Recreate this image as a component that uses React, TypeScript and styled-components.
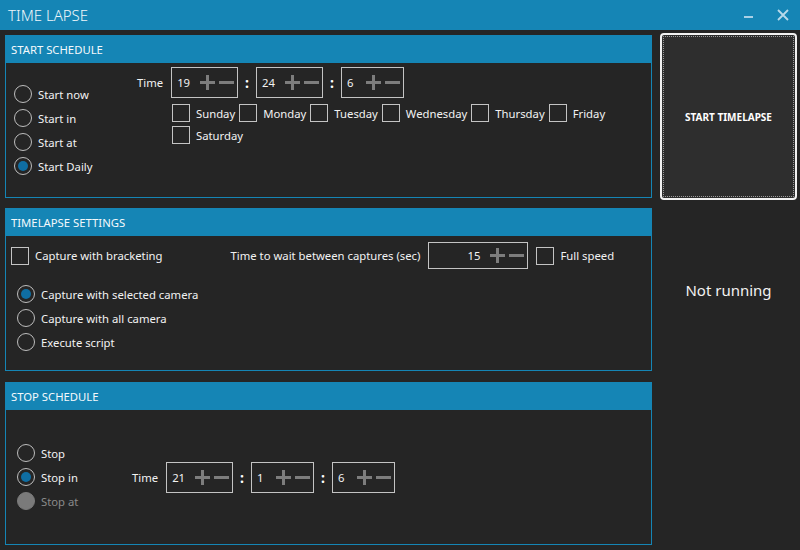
import React from "react";
import styled, { createGlobalStyle } from "styled-components";

const Global = createGlobalStyle`
  html, body { margin: 0; padding: 0; background: #252525; }
  body { font-family: "Noto Sans", "Open Sans", sans-serif; font-size: 11.3px; color: #f2f2f2; }
  * { box-sizing: border-box; }
`;

const BLUE = "#1585b5";

const Window = styled.div`
  width: 800px;
  height: 550px;
  background: #252525;
  display: flex;
  flex-direction: column;
  overflow: hidden;
`;

const TitleBar = styled.div`
  height: 30px;
  flex: none;
  background: ${BLUE};
  display: flex;
  align-items: center;
  padding: 0 4px 0 8px;
`;

const Title = styled.div`
  flex: 1;
  font-size: 15px;
  font-weight: 300;
  color: #eef6fa;
`;

const WinButton = styled.div`
  width: 26px;
  height: 20px;
  display: flex;
  align-items: center;
  justify-content: center;
  margin-left: 9px;
`;

const Main = styled.div`
  flex: 1;
  display: flex;
  padding: 5px 0 0 5px;
`;

const LeftCol = styled.div`
  width: 647px;
  display: flex;
  flex-direction: column;
`;

const RightCol = styled.div`
  flex: 1;
  display: flex;
  flex-direction: column;
  align-items: center;
  padding: 0 3px 0 8px;
`;

const Panel = styled.div<{ $mt?: number }>`
  height: 163px;
  flex: none;
  margin-top: ${(p) => p.$mt ?? 0}px;
  border: 1px solid ${BLUE};
  display: flex;
  flex-direction: column;
`;

const PanelHeader = styled.div`
  height: 27px;
  flex: none;
  background: ${BLUE};
  color: #f4f9fc;
  display: flex;
  align-items: center;
  padding-left: 5px;
`;

const PanelBody = styled.div<{ $pad: string; $align?: string }>`
  flex: 1;
  display: flex;
  padding: ${(p) => p.$pad};
  align-items: ${(p) => p.$align ?? "flex-start"};
`;

const Column = styled.div<{ $gap?: number; $pt?: number; $w?: number }>`
  display: flex;
  flex-direction: column;
  gap: ${(p) => p.$gap ?? 0}px;
  padding-top: ${(p) => p.$pt ?? 0}px;
  ${(p) => (p.$w ? `width: ${p.$w}px; flex: none;` : "")}
`;

const Row = styled.div<{ $gap?: number; $ml?: number }>`
  display: flex;
  align-items: center;
  gap: ${(p) => p.$gap ?? 0}px;
  margin-left: ${(p) => p.$ml ?? 0}px;
`;

const RadioRow = styled.div<{ $disabled?: boolean }>`
  height: 24px;
  display: flex;
  align-items: center;
  gap: 6px;
  color: ${(p) => (p.$disabled ? "#8a8a8a" : "#f2f2f2")};
`;

const RadioCircle = styled.span<{ $checked?: boolean; $disabled?: boolean }>`
  width: 18px;
  height: 18px;
  border-radius: 50%;
  border: 1.6px solid ${(p) => (p.$disabled ? "#7a7a7a" : "#bdbdbd")};
  background: ${(p) => (p.$disabled ? "#7a7a7a" : "transparent")};
  display: flex;
  align-items: center;
  justify-content: center;
  flex: none;
  &::after {
    content: "";
    width: 10px;
    height: 10px;
    border-radius: 50%;
    background: ${(p) => (p.$checked ? "#0f6ea3" : "transparent")};
  }
`;

const Radio = ({ label, checked, disabled }: { label: string; checked?: boolean; disabled?: boolean }) => (
  <RadioRow $disabled={disabled}>
    <RadioCircle $checked={checked} $disabled={disabled} />
    <span>{label}</span>
  </RadioRow>
);

const CheckRow = styled.div`
  display: flex;
  align-items: center;
  gap: 6px;
  height: 18px;
`;

const CheckBox = styled.span`
  width: 18px;
  height: 18px;
  border: 1.5px solid #c4c4c4;
  flex: none;
`;

const Check = ({ label }: { label: string }) => (
  <CheckRow>
    <CheckBox />
    <span>{label}</span>
  </CheckRow>
);

const SpinBox = styled.div<{ $w?: number; $h: number }>`
  height: ${(p) => p.$h}px;
  ${(p) => (p.$w ? `width: ${p.$w}px;` : "")}
  border: 1.5px solid #c4c4c4;
  display: flex;
  align-items: center;
  padding: 0 3px 0 5px;
  flex: none;
`;

const SpinValue = styled.span<{ $right?: boolean }>`
  flex: ${(p) => (p.$right ? 1 : "none")};
  min-width: 9px;
  text-align: ${(p) => (p.$right ? "right" : "left")};
  margin-right: 10px;
`;

const SpinIcons = styled.span`
  display: flex;
  align-items: center;
  gap: 4px;
`;

const PlusMinus = () => (
  <SpinIcons>
    <svg width="15" height="15" viewBox="0 0 15 15">
      <rect x="0" y="6" width="15" height="3" fill="#7d7d7d" />
      <rect x="6" y="0" width="3" height="15" fill="#7d7d7d" />
    </svg>
    <svg width="15" height="15" viewBox="0 0 15 15">
      <rect x="0" y="6" width="15" height="3" fill="#7d7d7d" />
    </svg>
  </SpinIcons>
);

const Colon = styled.span`
  font-weight: 700;
  font-size: 14px;
  margin: 0 7px;
  color: #ffffff;
`;

const TimeLabel = styled.span`
  margin-right: 8px;
`;

const TimeRow = ({ values, h }: { values: string[]; h: number }) => (
  <Row>
    <TimeLabel>Time</TimeLabel>
    {values.map((v, i) => (
      <React.Fragment key={i}>
        {i > 0 && <Colon>:</Colon>}
        <SpinBox $h={h}>
          <SpinValue>{v}</SpinValue>
          <PlusMinus />
        </SpinBox>
      </React.Fragment>
    ))}
  </Row>
);

const DayGrid = styled.div`
  display: flex;
  flex-wrap: wrap;
  column-gap: 4px;
  row-gap: 4px;
  width: 450px;
  margin-left: 35px;
  margin-top: 6px;
`;

const StartButton = styled.div`
  width: 137px;
  height: 167px;
  margin-top: -2px;
  background: #2e2e2e;
  border: 2px solid #f2f2f2;
  border-radius: 4px;
  outline: 1px dotted #9a9a9a;
  outline-offset: -4px;
  display: flex;
  align-items: center;
  justify-content: center;
  font-size: 10px;
  font-weight: 700;
  color: #ffffff;
`;

const Status = styled.div`
  margin-top: 80px;
  font-size: 15px;
  color: #f2f2f2;
`;

export default function App() {
  return (
    <Window>
      <Global />
      <TitleBar>
        <Title>TIME LAPSE</Title>
        <WinButton>
          <svg width="10" height="10" viewBox="0 0 10 10">
            <rect x="1" y="6" width="9" height="2" fill="#a9d0e6" />
          </svg>
        </WinButton>
        <WinButton>
          <svg width="12" height="12" viewBox="0 0 12 12">
            <path d="M1 1 L11 11 M11 1 L1 11" stroke="#b8d9ea" strokeWidth="1.8" />
          </svg>
        </WinButton>
      </TitleBar>
      <Main>
        <LeftCol>
          <Panel>
            <PanelHeader>START SCHEDULE</PanelHeader>
            <PanelBody $pad="4px 0 0 8px">
              <Column $w={123} $pt={15}>
                <Radio label="Start now" />
                <Radio label="Start in" />
                <Radio label="Start at" />
                <Radio label="Start Daily" checked />
              </Column>
              <Column>
                <TimeRow values={["19", "24", "6"]} h={31} />
                <DayGrid>
                  {["Sunday", "Monday", "Tuesday", "Wednesday", "Thursday", "Friday", "Saturday"].map((d) => (
                    <Check key={d} label={d} />
                  ))}
                </DayGrid>
              </Column>
            </PanelBody>
          </Panel>
          <Panel $mt={10}>
            <PanelHeader>TIMELAPSE SETTINGS</PanelHeader>
            <Column $pt={6}>
              <Row $ml={5}>
                <Check label="Capture with bracketing" />
                <Row $ml={68} $gap={8}>
                  <span>Time to wait between captures (sec)</span>
                  <SpinBox $h={27} $w={100}>
                    <SpinValue $right>15</SpinValue>
                    <PlusMinus />
                  </SpinBox>
                  <Check label="Full speed" />
                </Row>
              </Row>
              <Column $pt={13}>
                <Row $ml={11}>
                  <Column>
                    <Radio label="Capture with selected camera" checked />
                    <Radio label="Capture with all camera" />
                    <Radio label="Execute script" />
                  </Column>
                </Row>
              </Column>
            </Column>
          </Panel>
          <Panel $mt={11}>
            <PanelHeader>STOP SCHEDULE</PanelHeader>
            <PanelBody $pad="0 0 0 11px" $align="center">
              <Column $w={115}>
                <Radio label="Stop" />
                <Radio label="Stop in" checked />
                <Radio label="Stop at" disabled />
              </Column>
              <TimeRow values={["21", "1", "6"]} h={31} />
            </PanelBody>
          </Panel>
        </LeftCol>
        <RightCol>
          <StartButton>START TIMELAPSE</StartButton>
          <Status>Not running</Status>
        </RightCol>
      </Main>
    </Window>
  );
}
